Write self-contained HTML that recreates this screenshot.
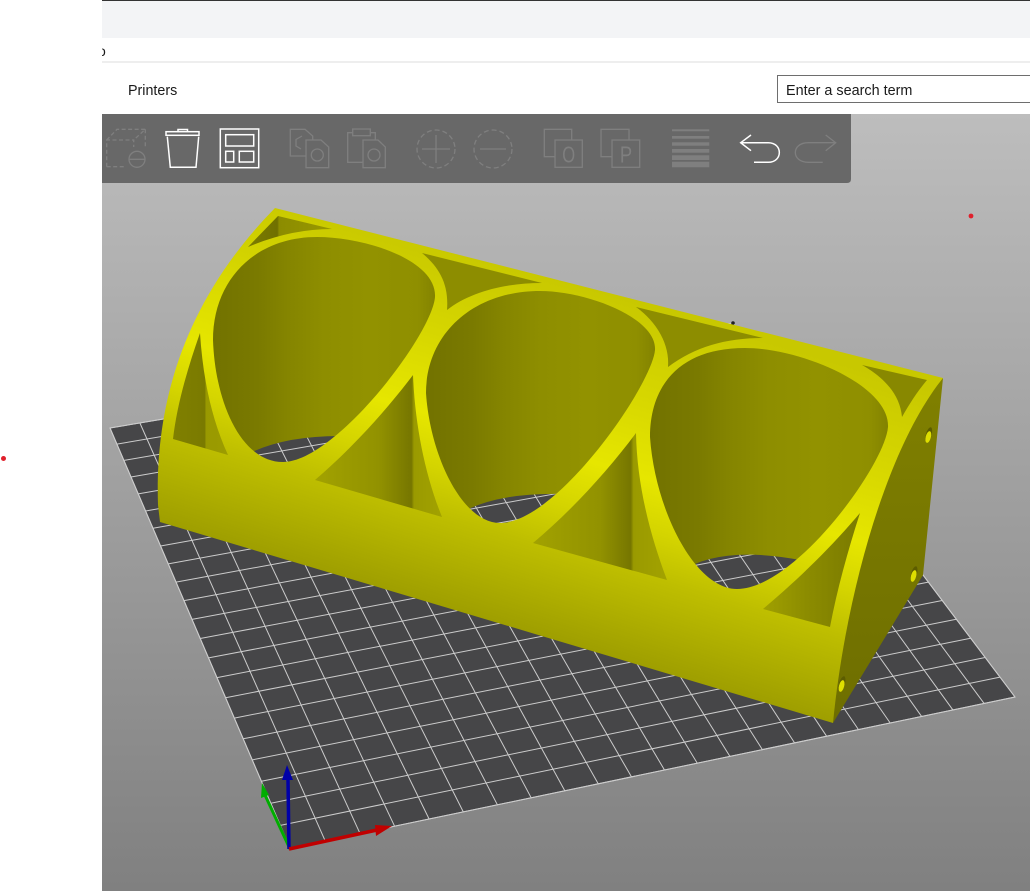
<!DOCTYPE html>
<html>
<head>
<meta charset="utf-8">
<style>
html,body{margin:0;padding:0;background:#fff;width:1030px;height:891px;overflow:hidden}
body{position:relative;font-family:"Liberation Sans",sans-serif;color:#1a1a1a}
.a{position:absolute}
</style>
</head>
<body>
<div class="a" style="left:102px;top:0;width:928px;height:1px;background:#333"></div>
<div class="a" style="left:102px;top:1px;width:928px;height:37px;background:#f3f4f6"></div>
<div class="a" style="left:102px;top:61px;width:928px;height:2px;background:#eeeeee"></div>
<div class="a" style="left:102px;top:42px;width:5px;height:18px;overflow:hidden;font-size:14px;line-height:18px"><span class="a" style="left:-4px;top:0">o</span></div>
<div class="a" style="left:128px;top:82px;font-size:14.3px;line-height:18px">Printers</div>
<div class="a" style="left:777px;top:75px;width:260px;height:26px;border:1px solid #6e6e6e;box-sizing:content-box"></div>
<div class="a" style="left:786px;top:82px;font-size:14.4px;line-height:18px">Enter a search term</div>

<svg class="a" style="left:102px;top:114px" width="928" height="777" viewBox="102 114 928 777" xmlns="http://www.w3.org/2000/svg">
<defs>
<linearGradient id="bg" x1="0" y1="114" x2="0" y2="891" gradientUnits="userSpaceOnUse"><stop offset="0" stop-color="#bdbdbd"/><stop offset="1" stop-color="#808080"/></linearGradient>
<linearGradient id="face" x1="610" y1="293" x2="510" y2="628" gradientUnits="userSpaceOnUse">
<stop offset="0" stop-color="#c8c800"/><stop offset=".25" stop-color="#d6d600"/><stop offset=".48" stop-color="#e6e600"/><stop offset=".62" stop-color="#d4d400"/><stop offset=".75" stop-color="#bebe00"/><stop offset="1" stop-color="#9e9e00"/>
</linearGradient>
<linearGradient id="w1" x1="213" y1="0" x2="435" y2="0" gradientUnits="userSpaceOnUse"><stop offset="0" stop-color="#727200"/><stop offset=".2" stop-color="#7a7a00"/><stop offset=".34" stop-color="#858500"/><stop offset=".5" stop-color="#8e8e00"/><stop offset=".7" stop-color="#929200"/><stop offset=".92" stop-color="#8f8f00"/><stop offset="1" stop-color="#838300"/></linearGradient>
<linearGradient id="w2" x1="426" y1="0" x2="655" y2="0" gradientUnits="userSpaceOnUse"><stop offset="0" stop-color="#727200"/><stop offset=".2" stop-color="#7a7a00"/><stop offset=".34" stop-color="#858500"/><stop offset=".5" stop-color="#8e8e00"/><stop offset=".7" stop-color="#929200"/><stop offset=".92" stop-color="#8f8f00"/><stop offset="1" stop-color="#838300"/></linearGradient>
<linearGradient id="w3" x1="650" y1="0" x2="888" y2="0" gradientUnits="userSpaceOnUse"><stop offset="0" stop-color="#727200"/><stop offset=".2" stop-color="#7a7a00"/><stop offset=".34" stop-color="#858500"/><stop offset=".5" stop-color="#8e8e00"/><stop offset=".7" stop-color="#929200"/><stop offset=".92" stop-color="#8f8f00"/><stop offset="1" stop-color="#838300"/></linearGradient>
<linearGradient id="tl" x1="173" y1="0" x2="228" y2="0" gradientUnits="userSpaceOnUse"><stop offset="0" stop-color="#808000"/><stop offset=".58" stop-color="#7a7a00"/><stop offset=".6" stop-color="#999900"/><stop offset="1" stop-color="#9c9c00"/></linearGradient>
<linearGradient id="t1" x1="248" y1="0" x2="332" y2="0" gradientUnits="userSpaceOnUse"><stop offset="0" stop-color="#7c7c00"/><stop offset=".35" stop-color="#707000"/><stop offset=".37" stop-color="#8c8c00"/><stop offset="1" stop-color="#989800"/></linearGradient>
<linearGradient id="t5" x1="315" y1="0" x2="442" y2="0" gradientUnits="userSpaceOnUse"><stop offset="0" stop-color="#a2a200"/><stop offset=".5" stop-color="#929200"/><stop offset=".76" stop-color="#767600"/><stop offset=".78" stop-color="#9a9a00"/><stop offset="1" stop-color="#a2a200"/></linearGradient>
<linearGradient id="t6" x1="533" y1="0" x2="667" y2="0" gradientUnits="userSpaceOnUse"><stop offset="0" stop-color="#a2a200"/><stop offset=".5" stop-color="#929200"/><stop offset=".73" stop-color="#767600"/><stop offset=".75" stop-color="#9a9a00"/><stop offset="1" stop-color="#a2a200"/></linearGradient>
<linearGradient id="t7" x1="763" y1="0" x2="860" y2="0" gradientUnits="userSpaceOnUse"><stop offset="0" stop-color="#a0a000"/><stop offset=".45" stop-color="#8c8c00"/><stop offset="1" stop-color="#7a7a00"/></linearGradient>
<linearGradient id="side" x1="0" y1="378" x2="0" y2="723" gradientUnits="userSpaceOnUse"><stop offset="0" stop-color="#808000"/><stop offset="1" stop-color="#6e6e00"/></linearGradient>
</defs>

<rect x="102" y="114" width="928" height="777" fill="url(#bg)"/>

<path d="M290,848 L1015,697 L733,323 L110,428 Z" fill="#464648" stroke="#d0d0d0" stroke-width="1"/>
<g id="grid" stroke="#cccccc" stroke-width="1" fill="none"></g>
<circle cx="733" cy="323" r="1.8" fill="#222"/>

<g id="axes">
<path d="M290,849 L265,795" stroke="#00ad00" stroke-width="3" fill="none"/>
<path d="M262,783 L269,795 L261,798 Z" fill="#00ad00"/>
<path d="M289,849 L288,780" stroke="#0000a8" stroke-width="3.5" fill="none"/>
<path d="M287,765 L293,780 L282,780 Z" fill="#0000a8"/>
<path d="M289,849 L377,830" stroke="#c00000" stroke-width="3.5" fill="none"/>
<path d="M392,826 L376,836 L375,825 Z" fill="#c00000"/>
</g>

<path d="M250,453 Q285,436 340,436 L390,385 L420,350 L445,297 L425,262 L360,232 L317,230 L245,250 L222,283 L210,300 L208,340 L222,415 Z" fill="url(#w1)"/>
<path d="M462,512 Q500,492 565,494 L605,455 L640,405 L662,350 L645,318 L590,290 L540,284 L460,305 L435,325 L418,393 L438,470 Z" fill="url(#w2)"/>
<path d="M680,572 Q720,545 800,560 L835,525 L865,490 L895,427 L865,375 L800,345 L745,340 L680,360 L648,395 L642,437 L660,520 Z" fill="url(#w3)"/>

<path fill-rule="evenodd" fill="url(#face)" d="M275,208 L943,378 L833,723 L160,522 L158,505 C155,415 177,308 275,208 Z
M317,237 C365,237 437,260 435,297 C432,335 335,462 283,462 C240,462 215,400 213,340 C213,280 255,237 317,237 Z
M540,291 C587,291 657,318 655,350 C652,385 557,523 500,523 C462,523 430,455 426,393 C426,335 472,291 540,291 Z
M745,348 C800,348 890,385 888,427 C885,465 795,589 737,589 C695,589 655,510 650,437 C650,385 680,348 745,348 Z"/>

<path d="M278,216 L332,229 Q290,229 248,247 Z" fill="url(#t1)"/>
<path d="M422,253 L542,283 C505,283 470,292 447,310 C449,285 440,268 422,253 Z" fill="#8d8d00"/>
<path d="M636,307 L763,338 C725,338 695,347 668,367 C670,345 657,322 636,307 Z" fill="#8d8d00"/>
<path d="M862,365 L927,380 C917,392 910,403 902,417 C900,395 885,378 862,365 Z" fill="#888800"/>
<path d="M200,333 C203,380 212,420 228,455 L173,439 C177,405 187,370 200,333 Z" fill="url(#tl)"/>
<path d="M413,375 C415,425 425,475 442,517 L315,480 C350,450 385,412 413,375 Z" fill="url(#t5)"/>
<path d="M636,433 C637,485 650,535 667,580 L533,543 C570,512 607,472 636,433 Z" fill="url(#t6)"/>
<path d="M860,513 C848,550 837,590 830,627 L763,609 C800,578 833,545 860,513 Z" fill="url(#t7)"/>

<path d="M943,378 L923,575 L833,723 C845,600 885,450 943,378 Z" fill="url(#side)"/>
<ellipse cx="928.700" cy="435" rx="2.900" ry="8" transform="rotate(15 928.700 435)" fill="#5c5c00"/>
<ellipse cx="928.300" cy="437" rx="2.600" ry="6" transform="rotate(15 928.300 437)" fill="#dede00"/>
<ellipse cx="914" cy="574" rx="2.900" ry="8" transform="rotate(15 914 574)" fill="#5c5c00"/>
<ellipse cx="913.600" cy="576" rx="2.600" ry="6" transform="rotate(15 913.600 576)" fill="#dede00"/>
<ellipse cx="842" cy="684" rx="2.900" ry="8" transform="rotate(15 842 684)" fill="#5c5c00"/>
<ellipse cx="841.600" cy="686" rx="2.600" ry="6" transform="rotate(15 841.600 686)" fill="#dede00"/>

<circle cx="971" cy="216" r="2.4" fill="#e0202c"/>

<path d="M102,114 H851 V179 Q851,183 847,183 H102 Z" fill="#686868"/>

<g fill="none" stroke="#7f7f7f" stroke-width="1.3">
<g stroke-dasharray="4 2.5">
<path d="M106.700,166.700 V140 H133.700 V147"/>
<path d="M106.700,166.700 H126"/>
<path d="M106.700,140 L117,129.300 H145.300 L133.700,140"/>
<path d="M145.300,129.300 V148"/>
</g>
<circle cx="137" cy="159.300" r="8"/>
<path d="M129,159.300 H145"/>

<path d="M306,156 H290.300 V129.300 H305 L312.700,136 V140"/>
<path d="M306,140 H321 L328.700,147 V167.700 H306 Z"/>
<circle cx="317.300" cy="155" r="6"/>
<path d="M302,136 L296,139.500 V146 L301,149"/>

<path d="M363,162.300 H347.700 V132.700 H352.700 M370.300,132.700 H375.300 V140"/>
<rect x="352.700" y="129" width="17.600" height="6.700"/>
<path d="M363,140 H378 L385.300,147 V167.700 H363 Z"/>
<circle cx="374" cy="155" r="6"/>

<circle cx="436" cy="149" r="19" stroke-dasharray="5 3"/>
<path d="M436,135 V163 M422,149 H450"/>
<circle cx="493" cy="149" r="19" stroke-dasharray="5 3"/>
<path d="M480,149 H506"/>

<path d="M555,156.700 H544.300 V129.300 H571.700 V140"/>
<rect x="555" y="140" width="27.300" height="27.300"/>
<path d="M612,156.700 H601 V129.300 H629 V140"/>
<rect x="612" y="140" width="27.700" height="27.300"/>

<path d="M835.700,142.700 H808.300 C791,142.700 791,162.300 808.300,162.300 H822.700 M825.700,135 L835.700,142.700 L825.700,150.700"/>
</g>
<text transform="translate(568.700 162.500) scale(.72 1)" font-family="Liberation Sans,sans-serif" font-size="23" fill="#7f7f7f" text-anchor="middle">O</text>
<text transform="translate(626 162.500) scale(.8 1)" font-family="Liberation Sans,sans-serif" font-size="23" fill="#7f7f7f" text-anchor="middle">P</text>
<g fill="#7f7f7f">
<rect x="672" y="129.300" width="37.300" height="2"/>
<rect x="672" y="136" width="37.300" height="2.700"/>
<rect x="672" y="142.300" width="37.300" height="3.400"/>
<rect x="672" y="149" width="37.300" height="3.700"/>
<rect x="672" y="155.300" width="37.300" height="4.700"/>
<rect x="672" y="161.700" width="37.300" height="5.600"/>
</g>
<g fill="none" stroke="#ffffff" stroke-width="1.5">
<rect x="166" y="131.700" width="33" height="3.600"/>
<path d="M178,131.700 V129.500 H187.500 V131.700"/>
<path d="M167.300,136.700 L170.300,167.300 H196 L198.700,136.700"/>
<rect x="220.300" y="129" width="38.400" height="38.700"/>
<rect x="225.700" y="134.700" width="28" height="11.300"/>
<rect x="225.700" y="151.300" width="8" height="10.700"/>
<rect x="239.300" y="151.300" width="14.400" height="10.700"/>
<path d="M740.700,142.700 H768.300 C783,142.700 783,162.300 768.300,162.300 H754 M751,135 L740.700,142.700 L751,150.700"/>
</g>
</svg>

<div class="a" style="left:1px;top:456px;width:5px;height:5px;border-radius:50%;background:#e0202c"></div>

<script>
(function(){
var x0=290,y0=848,x1=1015,y1=697,x2=733,y2=323,x3=110,y3=428;
var dx1=x1-x2,dx2=x3-x2,sx=x0-x1+x2-x3,dy1=y1-y2,dy2=y3-y2,sy=y0-y1+y2-y3;
var det=dx1*dy2-dx2*dy1;
var g=(sx*dy2-dx2*sy)/det,h=(dx1*sy-sx*dy1)/det;
var a=x1-x0+g*x1,b=x3-x0+h*x3,c=x0,d=y1-y0+g*y1,e=y3-y0+h*y3,f=y0;
function P(u,v){var w=g*u+h*v+1;return ((a*u+b*v+c)/w).toFixed(1)+","+((d*u+e*v+f)/w).toFixed(1);}
var s="",i,C=22,R=22;
for(i=0;i<=C;i++){s+="M"+P(i/C,0)+"L"+P(i/C,1);}
for(i=0;i<=R;i++){s+="M"+P(0,i/R)+"L"+P(1,i/R);}
var p=document.createElementNS("http://www.w3.org/2000/svg","path");
p.setAttribute("d",s);
document.getElementById("grid").appendChild(p);
})();
</script>
</body>
</html>
